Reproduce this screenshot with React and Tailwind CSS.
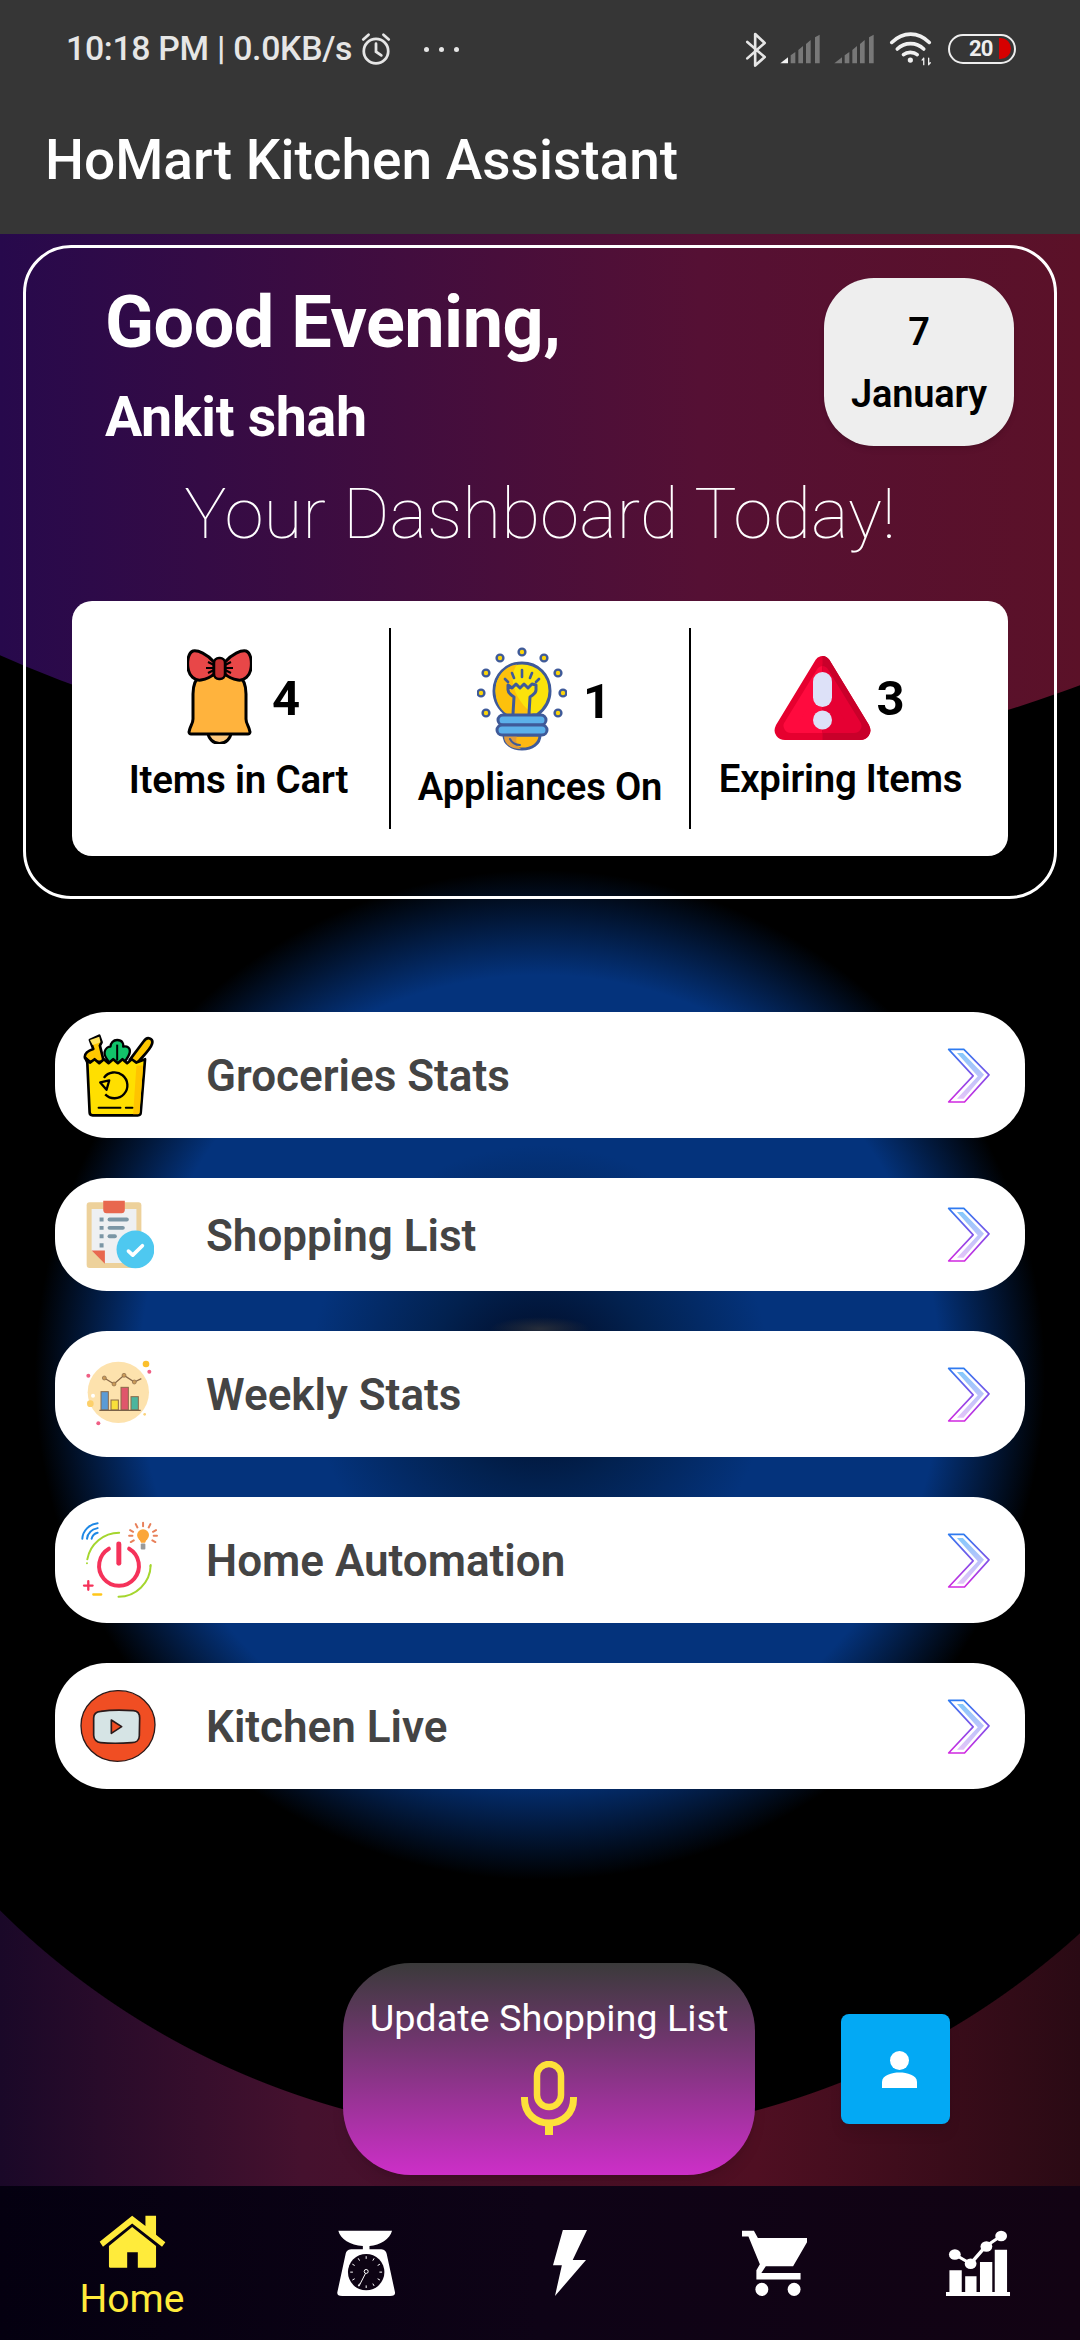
import React from "react";

const rows = [
  { label: "Groceries Stats", Icon: GroceryIcon, h: "h-[126px]" },
  { label: "Shopping List", Icon: ClipboardIcon, h: "h-[113px]" },
  { label: "Weekly Stats", Icon: WeeklyIcon, h: "h-[126px]" },
  { label: "Home Automation", Icon: AutomationIcon, h: "h-[126px]" },
  { label: "Kitchen Live", Icon: LiveIcon, h: "h-[126px]" },
];

function Signal({ first }) {
  return (
    <svg width="40" height="30" viewBox="180 40 120 90" aria-hidden="true">
      <path d="M181 128 L204 110 V128 Z" fill={first} />
      <path d="M212 104 L226 94 V128 H212 Z M235 88 L249 76 V128 H235 Z M258 70 L272 58 V128 H258 Z M285 50 L299 42 V128 H285 Z" fill="#787878" />
    </svg>
  );
}

function StatusBar() {
  return (
    <div className="flex h-[98px] items-center pl-[66px] pr-[64px] text-[#e6e6e6]">
      <span className="w-[289px] text-[33.8px] font-medium tracking-[-0.3px] whitespace-nowrap">10:18 PM | 0.0KB/s</span>
      <svg width="32" height="34" viewBox="0 0 30 32" fill="none" stroke="#e6e6e6" strokeWidth="2.6" strokeLinecap="round" className="ml-[5px]" aria-hidden="true">
        <circle cx="15" cy="18" r="11.5" />
        <path d="M15 11 V18.5 L20 22 M3 7 L8 2.5 M27 7 L22 2.5" />
      </svg>
      <div className="ml-[32px] flex gap-[10px]">
        <span className="h-[5px] w-[5px] rounded-full bg-[#e6e6e6]" />
        <span className="h-[5px] w-[5px] rounded-full bg-[#e6e6e6]" />
        <span className="h-[5px] w-[5px] rounded-full bg-[#e6e6e6]" />
      </div>
      <div className="ml-auto flex items-center">
        <svg width="23" height="37" viewBox="70 30 70 110" fill="none" stroke="#e6e6e6" strokeWidth="8" strokeLinecap="round" strokeLinejoin="round" aria-hidden="true">
          <path d="M80 62 L133 108 L104 134 V38 L133 65 L80 112" />
        </svg>
        <div className="ml-[13px]"><Signal first="#f2f2f2" /></div>
        <div className="ml-[14px]"><Signal first="#787878" /></div>
        <svg width="44" height="34" viewBox="508 38 132 104" fill="none" stroke="#f0f0f0" strokeWidth="11" strokeLinecap="round" className="ml-[15px]" aria-hidden="true">
          <path d="M515 70 C550 36 596 36 630 70 M532 90 C555 68 590 68 613 90 M551 107 C562 98 582 98 593 107" />
          <circle cx="572" cy="124" r="8" fill="#f0f0f0" stroke="none" />
          <path d="M613 138 V118 M608 124 L613 118 M628 118 V138 M633 132 L628 138" strokeWidth="4" />
        </svg>
        <div className="relative ml-[15px] flex h-[30px] w-[68px] items-center overflow-hidden rounded-full border-[2.5px] border-[#eeeeee] pl-[19px] text-[22px] leading-none font-bold tracking-[-0.8px] text-[#eeeeee]">
          <span>20</span>
          <span className="absolute right-[3px] top-[2px] h-[21px] w-[12px] rounded-r-full bg-[#d60000]" />
        </div>
      </div>
    </div>
  );
}

function BellIcon() {
  return (
    <svg width="65" height="96" viewBox="0 0 65 96" className="shrink-0" aria-hidden="true">
      <path d="M21 84 A11.5 11.5 0 0 0 44 84 Z" fill="#ffcb80" stroke="#000" strokeWidth="3" />
      <path d="M14 27 C8 31 6 38 6 46 V71 C6 76 3 78 2 84 C2 85 3 86 4 86 H61 C62 86 63 85 63 84 C62 78 59 76 59 71 V46 C59 38 57 31 51 27 Z" fill="#ffb33d" stroke="#000" strokeWidth="3" strokeLinejoin="round" />
      <path d="M27 14 C20 6 11 2 6 3 C1 5 0 14 1 20 C2 28 8 33 14 32 C20 31 25 28 27 26 Z M38 14 C45 6 54 2 59 3 C64 5 65 14 64 20 C63 28 57 33 51 32 C45 31 40 28 38 26 Z" fill="#e84748" stroke="#000" strokeWidth="3" strokeLinejoin="round" />
      <rect x="27" y="10" width="11" height="21" rx="5" fill="#c63030" stroke="#000" strokeWidth="2.5" />
      <path d="M21 14 L27 17 M19 20 H27 M21 25 L27 22 M44 14 L38 17 M46 20 H38 M44 25 L38 22" stroke="#000" strokeWidth="2" />
    </svg>
  );
}

function BulbIcon() {
  const dots = [[45, 5], [23, 11], [67, 11], [9, 26], [81, 26], [4, 46], [86, 46], [9, 66], [81, 66]];
  return (
    <svg width="90" height="104" viewBox="0 0 90 104" className="shrink-0" aria-hidden="true">
      {dots.map(([x, y]) => (
        <circle key={`${x}-${y}`} cx={x} cy={y} r="3.4" fill="#fbd40b" stroke="#3f5a99" strokeWidth="2.4" />
      ))}
      <path d="M27 88 H63 C63 97 55 102 45 102 C35 102 27 97 27 88 Z" fill="#fdb813" stroke="#3f5a99" strokeWidth="3" />
      <path d="M27 89 H40 C38 95 40 99 44 102 C34 102 27 97 27 89 Z" fill="#e09a3a" />
      <path d="M33 92 C35 96 39 98 43 98" fill="none" stroke="#3f5a99" strokeWidth="2" strokeLinecap="round" />
      <path d="M30 68 C22 62 17 53 17 44 C17 28 29 16 45 16 C61 16 73 28 73 44 C73 53 68 62 60 68 Z" fill="#fbe30b" stroke="#3f5a99" strokeWidth="3" />
      <path d="M30 67 C22 62 18.500 53 18.500 44 C18.500 30 28 19 40 17.500 C32 28 34 50 56 67 Z" fill="#fdc10c" />
      <path d="M36 67 L37 50 C35 48 31 47 31 43 L31 38 L35 41 L39 37 L43 41 L47 37 L51 41 L55 37 L59 38 L59 43 C59 47 55 48 53 50 L52 67" fill="none" stroke="#3f5a99" strokeWidth="3" strokeLinejoin="round" />
      <path d="M45 23 V30 M35 26 L37 31 M55 26 L53 31 M28 32 L31 35 M62 32 L59 35" stroke="#3f5a99" strokeWidth="2.6" strokeLinecap="round" />
      <rect x="21" y="68" width="48" height="10" rx="5" fill="#5cb0ea" stroke="#3f5a99" strokeWidth="3" />
      <rect x="20" y="78" width="50" height="10" rx="5" fill="#5cb0ea" stroke="#3f5a99" strokeWidth="3" />
    </svg>
  );
}

function AlertIcon() {
  return (
    <svg width="97" height="85" viewBox="0 0 97 85" className="shrink-0" aria-hidden="true">
      <defs>
        <clipPath id="alertRight"><rect x="48.500" y="0" width="49" height="85" /></clipPath>
      </defs>
      <path d="M48.500 9 L88 74 C89 76 88 77 86 77 H11 C9 77 8 76 9 74 Z" fill="#e6002f" stroke="#e6002f" strokeWidth="16" strokeLinejoin="round" />
      <path d="M48.500 17 L81 70 C82 71 81 72 80 72 H17 C16 72 15 71 16 70 Z" fill="#ff0a3e" stroke="#ff0a3e" strokeWidth="12" strokeLinejoin="round" />
      <g clipPath="url(#alertRight)">
        <path d="M48.500 9 L88 74 C89 76 88 77 86 77 H11 C9 77 8 76 9 74 Z" fill="#c9002a" stroke="#c9002a" strokeWidth="16" strokeLinejoin="round" />
        <path d="M48.500 17 L81 70 C82 71 81 72 80 72 H17 C16 72 15 71 16 70 Z" fill="#e60033" stroke="#e60033" strokeWidth="12" strokeLinejoin="round" />
      </g>
      <rect x="39" y="17" width="19" height="35" rx="9.500" fill="#dde1f8" />
      <circle cx="48.500" cy="65" r="9.500" fill="#dde1f8" />
    </svg>
  );
}

function GroceryIcon() {
  return (
    <svg width="71" height="83" viewBox="130 100 212 250" className="ml-[28px]" aria-hidden="true">
      <path d="M270 178 L312 122 C322 106 342 112 337 130 C332 148 304 172 292 188 Z" fill="#ffc800" stroke="#000" strokeWidth="8" strokeLinejoin="round" />
      <path d="M150 118 L178 105 L185 125 L180 135 L192 184 L150 184 L135 172 C132 160 145 150 160 145 Z" fill="#ffc800" stroke="#000" strokeWidth="8" strokeLinejoin="round" />
      <path d="M150 118 L178 108 L182 125 L158 133 Z" fill="#ffe45c" />
      <path d="M232 118 C248 118 252 130 250 138 C262 135 272 142 270 155 C268 168 258 178 250 190 H212 C204 178 192 170 194 155 C196 142 206 138 212 138 C212 128 220 118 232 118 Z" fill="#12c46a" stroke="#000" strokeWidth="7" strokeLinejoin="round" />
      <path d="M232 132 V180" stroke="#000" strokeWidth="6" />
      <path d="M136 172 L150 186 L164 176 L178 188 L192 176 L206 188 L220 176 L234 188 L248 176 L262 188 L276 176 L290 186 L316 176 L303 336 C303 342 300 345 294 345 H158 C152 345 149 342 149 336 L142 186 Z" fill="#ffdf00" stroke="#000" strokeWidth="8" strokeLinejoin="round" />
      <path d="M290 195 L280 342 H294 C299 342 300 338 300 332 L310 195 Z" fill="#ffc400" />
      <path d="M192 232 A39 39 0 1 1 196 282 M181 246 L200 268 L208 240 Z" fill="none" stroke="#000" strokeWidth="7" strokeLinejoin="round" />
      <path d="M176 322 H242 M258 322 H278" stroke="#000" strokeWidth="6" strokeLinecap="round" />
    </svg>
  );
}

function ClipboardIcon() {
  return (
    <svg width="69" height="69" viewBox="130 598 208 208" className="ml-[30px]" aria-hidden="true">
      <rect x="135" y="605" width="165" height="198" rx="9" fill="#edd19b" />
      <path d="M150 625 H285 V788 H190 L150 750 Z" fill="#eef0f2" />
      <path d="M150 750 H190 V790 Z" fill="#e8684f" />
      <path d="M185 600 H250 V628 C250 634 246 638 240 638 H195 C189 638 185 634 185 628 Z" fill="#e8684f" />
      <path d="M174 651 H186 V663 H174 Z M174 676 H186 V688 H174 Z M174 701 H186 V713 H174 Z M174 728 H186 V741 H174 Z" fill="#7b96a5" />
      <rect x="198" y="651" width="64" height="12" rx="6" fill="#7b96a5" />
      <rect x="198" y="676" width="52" height="12" rx="6" fill="#7b96a5" />
      <rect x="198" y="701" width="28" height="12" rx="6" fill="#7b96a5" />
      <circle cx="282" cy="747" r="57" fill="#4ec8f0" />
      <path d="M261 752 L274 764 L303 736" fill="none" stroke="#fff" strokeWidth="11" strokeLinecap="round" strokeLinejoin="round" />
    </svg>
  );
}

function WeeklyIcon() {
  return (
    <svg width="100" height="100" viewBox="0 0 300 300" className="ml-[15px]" aria-hidden="true">
      <circle cx="145" cy="145" r="92" fill="#fde2ad" />
      <circle cx="228" cy="60" r="10" fill="#fbc02d" />
      <circle cx="238" cy="83" r="6" fill="#ef5f85" />
      <circle cx="55" cy="95" r="6" fill="#ef5f85" />
      <circle cx="69" cy="155" r="6" fill="#ffffff" />
      <circle cx="61" cy="179" r="10" fill="#fdd06a" />
      <circle cx="85" cy="238" r="6" fill="#ef5f85" />
      <circle cx="224" cy="211" r="4" fill="#fbd27a" />
      <path d="M103 102 L132 120 L162 94 L193 114 L214 104" fill="none" stroke="#8a6a4a" strokeWidth="4" />
      <circle cx="103" cy="102" r="6" fill="#c99a58" stroke="#8a6a4a" strokeWidth="2" />
      <circle cx="132" cy="120" r="6" fill="#c99a58" stroke="#8a6a4a" strokeWidth="2" />
      <circle cx="162" cy="94" r="6" fill="#c99a58" stroke="#8a6a4a" strokeWidth="2" />
      <circle cx="193" cy="114" r="6" fill="#c99a58" stroke="#8a6a4a" strokeWidth="2" />
      <rect x="93" y="143" width="22" height="55" fill="#5b9bd5" stroke="#8a6a4a" strokeWidth="3" />
      <rect x="123" y="168" width="22" height="30" fill="#f8e03a" stroke="#8a6a4a" strokeWidth="3" />
      <rect x="153" y="130" width="22" height="68" fill="#e0566b" stroke="#8a6a4a" strokeWidth="3" />
      <rect x="183" y="158" width="22" height="40" fill="#4bb59e" stroke="#8a6a4a" strokeWidth="3" />
      <path d="M88 199 H212" stroke="#7a6248" strokeWidth="4" />
    </svg>
  );
}

function AutomationIcon() {
  return (
    <svg width="78" height="80" viewBox="120 60 235 240" className="ml-[25px]" aria-hidden="true">
      <path d="M142 178 A98 98 0 0 1 238 98 M333 195 A98 98 0 0 1 236 291" fill="none" stroke="#a5d62e" strokeWidth="6" strokeLinecap="round" />
      <path d="M207 146 A60 60 0 1 0 268 146" fill="none" stroke="#f5325a" strokeWidth="12" strokeLinecap="round" />
      <path d="M237 132 V190" stroke="#f5325a" strokeWidth="15" strokeLinecap="round" />
      <path d="M127 116 C128 92 148 72 173 69 M141 116 C143 100 155 88 173 84 M155 116 C157 108 164 100 173 98" fill="none" stroke="#1e88e5" strokeWidth="6" strokeLinecap="round" />
      <circle cx="310" cy="105" r="18" fill="#fba63a" />
      <path d="M298 116 L304 128 H316 L322 116 Z" fill="#fba63a" />
      <rect x="303" y="130" width="14" height="18" rx="3" fill="#9a9a9a" />
      <path d="M310 68 V78 M288 72 L293 82 M332 72 L327 82 M271 90 L280 95 M349 90 L340 95 M268 107 H278 M342 107 H352 M273 126 L282 121 M347 126 L338 121" stroke="#e8805a" strokeWidth="6" strokeLinecap="round" />
      <path d="M132 257 H158 M145 244 V270" stroke="#f5325a" strokeWidth="7" strokeLinecap="round" />
      <path d="M160 284 H184" stroke="#ffc61a" strokeWidth="7" strokeLinecap="round" />
      <circle cx="141" cy="190" r="3" fill="#a5d62e" />
      <circle cx="332" cy="198" r="3" fill="#a5d62e" />
    </svg>
  );
}

function LiveIcon() {
  return (
    <svg width="76" height="74" viewBox="120 575 228 222" className="ml-[25px]" aria-hidden="true">
      <path d="M232 580 C295 578 345 625 345 682 C345 745 295 792 232 792 C170 792 123 745 123 685 C123 628 170 582 232 580 Z" fill="#f04e23" stroke="#2b1a1a" strokeWidth="4" />
      <path d="M182 642 C210 638 250 638 280 640 C292 641 299 650 299 662 L298 715 C298 728 288 736 275 736 C245 738 205 738 182 736 C170 735 161 726 161 714 L161 662 C161 650 170 643 182 642 Z" fill="#d6e4e5" stroke="#2b1a1a" strokeWidth="5" />
      <path d="M214 668 L245 688 L214 708 Z" fill="#f04e23" stroke="#2b1a1a" strokeWidth="5" strokeLinejoin="round" />
    </svg>
  );
}

function Chevron() {
  return (
    <svg width="43" height="57" viewBox="135 138 130 172" className="ml-auto mr-[35px]" aria-hidden="true">
      <defs>
        <linearGradient id="chevStroke" x1="0" y1="0" x2="0" y2="1">
          <stop offset="0" stopColor="#2f7bf0" />
          <stop offset="1" stopColor="#d028e0" />
        </linearGradient>
        <linearGradient id="chevFill" x1="0" y1="0" x2="0" y2="1">
          <stop offset="0" stopColor="#85c8fb" />
          <stop offset="0.5" stopColor="#bcc4fb" />
          <stop offset="1" stopColor="#e2c4f8" />
        </linearGradient>
      </defs>
      <path d="M165 156 H183 L247 222 L185 294 H165 L228 226 Z" fill="url(#chevFill)" />
      <path d="M140 145 H186 L262 222 L188 304 H140 L214 225 Z" fill="none" stroke="url(#chevStroke)" strokeWidth="5" strokeLinejoin="round" />
    </svg>
  );
}

function MicIcon() {
  return (
    <svg width="56" height="74" viewBox="0 0 56 74" fill="none" stroke="#fde13a" aria-hidden="true">
      <rect x="16" y="3" width="24" height="43" rx="12" strokeWidth="6.500" />
      <path d="M3.500 36 V38 C3.500 52 14 62 28 62 C42 62 52.500 52 52.500 38 V36" strokeWidth="7" />
      <path d="M28 60 V74" strokeWidth="8" />
    </svg>
  );
}

function HomeNavIcon() {
  return (
    <svg width="67" height="54" viewBox="295 163 202 162" aria-hidden="true">
      <path d="M297 243 L395 165 L435 196 V165 H467 V222 L495 245 L485 258 L395 188 L307 258 Z M395 199 L467 256 V316 C467 320 465 322 461 322 H412 V275 H380 V322 H331 C327 322 325 320 325 316 V256 Z" fill="#ffeb3b" />
    </svg>
  );
}

function ScaleIcon() {
  const ticks = [];
  for (let i = 0; i < 12; i += 1) {
    const a = (i * Math.PI) / 6;
    ticks.push(
      <path
        key={i}
        d={`M${1098 + 40 * Math.sin(a)} ${335 - 40 * Math.cos(a)} L${1098 + 48 * Math.sin(a)} ${335 - 48 * Math.cos(a)}`}
        stroke="#fff"
        strokeWidth="3"
      />
    );
  }
  return (
    <svg width="59" height="67" viewBox="1010 208 178 202" aria-hidden="true">
      <path d="M1014 210 H1176 C1170 235 1140 254 1108 256 V266 H1140 C1150 266 1158 270 1160 280 L1185 396 C1186 402 1182 407 1170 407 H1026 C1014 407 1010 402 1011 396 L1036 280 C1038 270 1046 266 1056 266 H1088 V256 C1050 254 1020 235 1014 210 Z" fill="#fff" />
      <circle cx="1098" cy="335" r="55" fill="#0d0313" />
      {ticks}
      <path d="M1098 335 L1076 378" stroke="#fff" strokeWidth="3" />
      <circle cx="1098" cy="333" r="6" fill="#0d0313" stroke="#fff" strokeWidth="3" />
    </svg>
  );
}

function BoltIcon() {
  return (
    <svg width="34" height="66" viewBox="508 870 69 198" preserveAspectRatio="none" aria-hidden="true">
      <path d="M528 870 H577 L548 960 H575 L512 1068 L526 976 H508 Z" fill="#fff" />
    </svg>
  );
}

function CartIcon() {
  return (
    <svg width="67" height="66" viewBox="885 868 135 200" preserveAspectRatio="none" aria-hidden="true">
      <path d="M887 870 H911 L919 892 H1018 V905 L990 978 H935 L926 998 H1005 V1018 H916 V990 L923 972 L900 888 H887 Z" fill="#fff" />
      <ellipse cx="927" cy="1048" rx="13" ry="20" fill="#fff" />
      <ellipse cx="992" cy="1048" rx="13" ry="20" fill="#fff" />
    </svg>
  );
}

function ChartIcon() {
  return (
    <svg width="66" height="66" viewBox="1296 868 134 200" preserveAspectRatio="none" aria-hidden="true">
      <path d="M1298 1056 H1428 V1068 H1298 Z M1305 990 H1330 V1056 H1305 Z M1337 1008 H1360 V1056 H1337 Z M1367 965 H1392 V1056 H1367 Z M1397 928 H1422 V1056 H1397 Z" fill="#fff" />
      <path d="M1316 942 L1348 970 L1378 918 L1410 886" fill="none" stroke="#fff" strokeWidth="8" />
      <ellipse cx="1316" cy="942" rx="12" ry="16" fill="#fff" />
      <ellipse cx="1348" cy="970" rx="12" ry="16" fill="#fff" />
      <ellipse cx="1380" cy="918" rx="12" ry="16" fill="#fff" />
      <ellipse cx="1410" cy="886" rx="12" ry="16" fill="#fff" />
    </svg>
  );
}

function StatCards() {
  return (
    <div className="mx-[46px] mt-[45px] flex h-[255px] rounded-[20px] bg-white py-[27px] text-black">
      <div className="flex w-[317px] flex-col items-center pl-4">
        <div className="mt-[20px] flex h-[96px] items-center pl-[10px]">
          <BellIcon />
          <span className="ml-[20px] mt-[4px] text-[49px] leading-none font-bold">4</span>
        </div>
        <span className="mt-[14px] text-[38.5px] leading-[44px] font-semibold tracking-[-0.2px] whitespace-nowrap">Items in Cart</span>
      </div>
      <div className="flex w-[302px] flex-col items-center border-x-2 border-black">
        <div className="mt-[19px] flex h-[104px] items-center pl-[8px]">
          <BulbIcon />
          <span className="ml-[16px] mt-[4px] text-[49px] leading-none font-bold">1</span>
        </div>
        <span className="mt-[14px] text-[38.2px] leading-[44px] font-semibold tracking-[-0.2px] whitespace-nowrap">Appliances On</span>
      </div>
      <div className="flex w-[317px] flex-col items-center pr-[18px]">
        <div className="mt-[27px] flex h-[85px] items-center pr-[2px]">
          <AlertIcon />
          <span className="ml-[5px] mt-[1px] text-[49px] leading-none font-bold">3</span>
        </div>
        <span className="mt-[17px] text-[38.3px] leading-[44px] font-semibold tracking-[-0.2px] whitespace-nowrap">Expiring Items</span>
      </div>
    </div>
  );
}

function Hero() {
  return (
    <section className="relative mx-[23px] mt-[11px] h-[654px] rounded-[48px] border-[3px] border-white">
      <div className="flex pl-[79px] pr-[40px] pt-[30px]">
        <div className="h-[168px] text-white">
          <h2 className="mt-[4px] text-[72px] leading-[82px] font-bold tracking-[-0.5px] whitespace-nowrap">Good Evening,</h2>
          <p className="mt-[24px] text-[55.5px] leading-[60px] font-bold tracking-[-0.3px] whitespace-nowrap">Ankit shah</p>
        </div>
        <div className="ml-auto flex h-[168px] w-[190px] flex-col items-center justify-center rounded-[50px] bg-[#eeeeee] pt-[2px] text-[38px] font-semibold text-black shadow-md">
          <span className="leading-[62px]">7</span>
          <span className="leading-[62px] tracking-[-0.2px]">January</span>
        </div>
      </div>
      <p className="mt-[26px] text-center text-[71px] leading-[84px] font-thin text-white whitespace-nowrap">Your Dashboard Today!</p>
      <StatCards />
    </section>
  );
}

function MenuList() {
  return (
    <nav className="relative mx-[55px] mt-[113px] flex flex-col gap-10">
      {rows.map(({ label, Icon, h }) => (
        <div key={label} className={`flex ${h} items-center rounded-[52px] bg-white`}>
          <div className="flex w-[151px] shrink-0 items-center">
            <Icon />
          </div>
          <span className="mt-[2px] text-[44px] font-semibold text-[#444444] whitespace-nowrap">{label}</span>
          <Chevron />
        </div>
      ))}
    </nav>
  );
}

export default function App() {
  return (
    <div className="flex h-[2340px] w-[1080px] flex-col overflow-hidden bg-black [font-family:Roboto,sans-serif]">
      <header className="h-[234px] shrink-0 bg-[#363636]">
        <StatusBar />
        <h1 className="pl-[45px] pt-[32px] text-[55px] leading-[60px] font-medium text-white whitespace-nowrap">HoMart Kitchen Assistant</h1>
      </header>

      <main className="relative flex-1 overflow-hidden bg-[radial-gradient(ellipse_50px_12px_at_540px_1095px,#262d3a_0,transparent_100%),radial-gradient(circle_505px_at_540px_1141px,#010820_0,#02214f_110px,#04337c_230px,#04337c_400px,transparent_505px),radial-gradient(circle_785px_at_552px_1119px,#000_784px,transparent_785px),linear-gradient(180deg,#000_1119px,transparent_1119px),linear-gradient(90deg,#1a0828,#45112e_28%,#4f0f22_70%,#2a0a14)]">
        <div className="absolute left-[-863px] top-[-2338px] h-[2880px] w-[2880px] rounded-full bg-[linear-gradient(90deg,#27094c_863px,#551034_1563px,#5b1128_1943px)]" />
        <Hero />
        <MenuList />

        <button className="absolute bottom-[11px] left-[343px] flex h-[212px] w-[412px] flex-col items-center rounded-[68px] bg-[linear-gradient(180deg,#3a3a3a,#cd2fc8)] pt-[33px] shadow-lg">
          <span className="text-[37.8px] leading-[44px] text-white whitespace-nowrap">Update Shopping List</span>
          <span className="mt-[21px]"><MicIcon /></span>
        </button>
        <button className="absolute bottom-[62px] left-[841px] flex h-[110px] w-[109px] items-center justify-center rounded-[8px] bg-[#03a9f4] pl-[8px] shadow-lg">
          <svg width="35" height="37" viewBox="0 0 35 37" aria-hidden="true">
            <ellipse cx="17.500" cy="9.500" rx="9.500" ry="9.500" fill="#fff" />
            <path d="M0 37 V31 C0 24 10 21.500 17.500 21.500 C25 21.500 35 24 35 31 V37 Z" fill="#fff" />
          </svg>
        </button>
      </main>

      <footer className="grid h-[154px] shrink-0 grid-cols-[264px_repeat(4,204px)] bg-[linear-gradient(90deg,#040010,#0e0316_50%,#120313)]">
        <div className="flex flex-col items-center pt-[29px]">
          <HomeNavIcon />
          <span className="mt-[8px] text-[39px] leading-[44px] text-[#ffeb3b]">Home</span>
        </div>
        <div className="flex justify-center pt-[44px]"><ScaleIcon /></div>
        <div className="flex justify-center pt-[44px]"><BoltIcon /></div>
        <div className="flex justify-center pt-[44px]"><CartIcon /></div>
        <div className="flex justify-center pt-[44px]"><ChartIcon /></div>
      </footer>
    </div>
  );
}
